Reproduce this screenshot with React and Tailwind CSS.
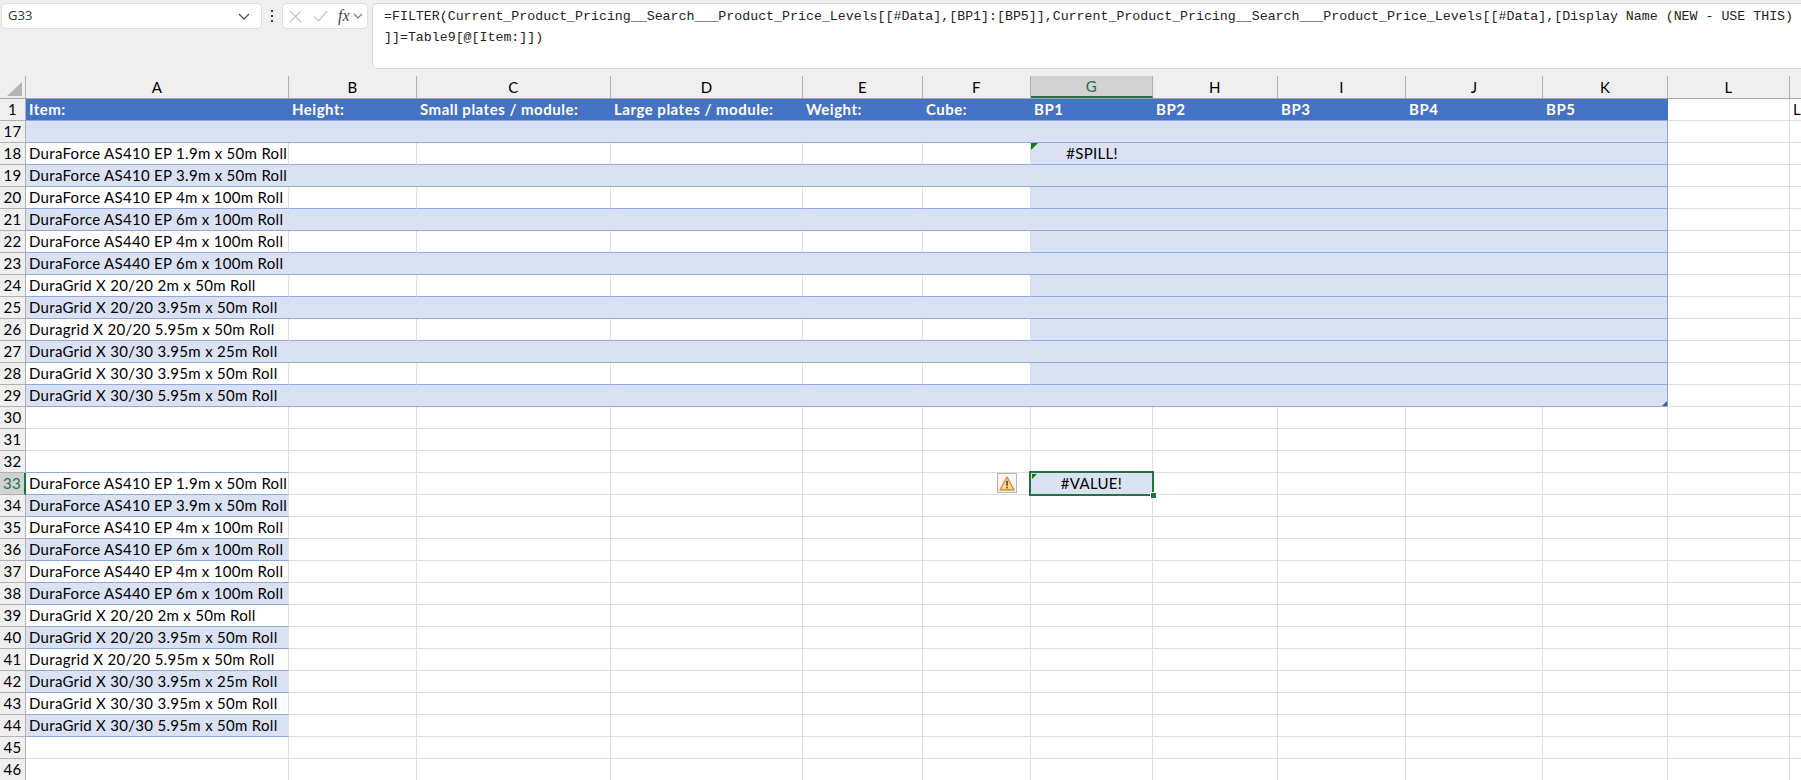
import React from 'react';

const columns = [
  { name: 'A', w: 'w-[263px]', head: 'Item:' },
  { name: 'B', w: 'w-[128px]', head: 'Height:' },
  { name: 'C', w: 'w-[194px]', head: 'Small plates / module:' },
  { name: 'D', w: 'w-[192px]', head: 'Large plates / module:' },
  { name: 'E', w: 'w-[120px]', head: 'Weight:' },
  { name: 'F', w: 'w-[108px]', head: 'Cube:' },
  { name: 'G', w: 'w-[122px]', head: 'BP1' },
  { name: 'H', w: 'w-[125px]', head: 'BP2' },
  { name: 'I', w: 'w-[128px]', head: 'BP3' },
  { name: 'J', w: 'w-[137px]', head: 'BP4' },
  { name: 'K', w: 'w-[125px]', head: 'BP5' },
  { name: 'L', w: 'w-[122px]', head: '' },
  { name: '', w: 'w-[12px]', head: '' },
];

const items = [
  'DuraForce AS410 EP 1.9m x 50m Roll',
  'DuraForce AS410 EP 3.9m x 50m Roll',
  'DuraForce AS410 EP 4m x 100m Roll',
  'DuraForce AS410 EP 6m x 100m Roll',
  'DuraForce AS440 EP 4m x 100m Roll',
  'DuraForce AS440 EP 6m x 100m Roll',
  'DuraGrid X 20/20 2m x 50m Roll',
  'DuraGrid X 20/20 3.95m x 50m Roll',
  'Duragrid X 20/20 5.95m x 50m Roll',
  'DuraGrid X 30/30 3.95m x 25m Roll',
  'DuraGrid X 30/30 3.95m x 50m Roll',
  'DuraGrid X 30/30 5.95m x 50m Roll',
];

const GRID = 'border-b border-r border-b-[#dedede] border-r-[#dedede]';

function ErrorFlag({ small }) {
  return (
    <svg
      className={`absolute ${small ? 'left-[1px] top-[1px] w-[5px] h-[5px]' : 'left-0 top-0 w-[7px] h-[7px]'}`}
      viewBox="0 0 7 7"
    >
      <polygon points="0,0 7,0 0,7" fill="#107c10" />
    </svg>
  );
}

function WarnIcon() {
  return (
    <div className="absolute left-[-34px] top-0 w-[20px] h-[20px] border border-[#b5b5b5] bg-[#f6f6f6] flex items-center justify-center">
      <svg width="16" height="15" viewBox="0 0 16 15">
        <polygon points="8,1 15,14 1,14" fill="#fbd9a0" stroke="#e8862a" strokeWidth="1.4" strokeLinejoin="round" />
        <rect x="7.3" y="4.8" width="1.5" height="5" fill="#3a3a3a" />
        <rect x="7.3" y="10.8" width="1.5" height="1.6" fill="#3a3a3a" />
      </svg>
    </div>
  );
}

function Selection() {
  return (
    <>
      <div className="absolute left-[-2px] top-[-2px] w-[125px] h-[25px] border-2 border-[#217346]" />
      <div className="absolute left-[119px] top-[19px] w-[5px] h-[5px] bg-[#217346] border border-white box-content" />
    </>
  );
}

function cellClass(kind, i) {
  const inTable = i <= 10;
  if (kind === 'head') {
    if (inTable) return 'bg-[#4472c4] border-b border-[#8ea9db] text-white font-bold tracking-[0.5px]';
    return GRID;
  }
  if (kind === 'blue' || kind === 'white') {
    if (!inTable) return GRID;
    const right = i === 10 ? 'border-r border-r-[#8ea9db]' : '';
    if (kind === 'blue' || i >= 6) return `bg-[#d9e1f2] border-b border-b-[#8ea9db] ${right}`;
    if (i === 5) return 'border-b border-r border-b-[#8ea9db] border-r-[#d9e1f2]';
    return 'border-b border-r border-b-[#8ea9db] border-r-[#dedede]';
  }
  if (kind === 'listBlue' && i === 0) return 'bg-[#d9e1f2] border-b border-b-[#8ea9db] border-r border-r-[#d9e1f2]';
  if ((kind === 'listWhite' || kind === 'listTop') && i === 0) return 'border-b border-r border-b-[#8ea9db] border-r-[#dedede]';
  return GRID;
}

function Row({ num, kind = 'plain', item, selected, children }) {
  return (
    <div className="flex h-[22px]">
      <div
        className={`w-[26px] shrink-0 flex items-center justify-center border-b border-b-[#b1b1b1] ${
          selected ? 'bg-[#d2d2d2] text-[#217346] border-r-2 border-r-[#217346]' : 'bg-[#efefef] border-r border-r-[#b1b1b1]'
        }`}
      >
        {num}
      </div>
      {columns.map((c, i) => (
        <div key={i} className={`${c.w} shrink-0 relative flex items-center whitespace-nowrap ${cellClass(kind, i)}`}>
          {kind === 'head' && c.head && <span className="pl-[3px]">{c.head}</span>}
          {i === 0 && item && <span className="pl-[3px]">{item}</span>}
          {kind === 'head' && i === 12 && <span className="pl-[3px]">L</span>}
          {children && children(i)}
        </div>
      ))}
    </div>
  );
}

function ColumnHeader() {
  return (
    <div className="flex h-[23px] bg-[#efefef] border-b border-[#a6a6a6]">
      <div className="w-[26px] shrink-0 relative border-r border-[#b1b1b1]">
        <svg className="absolute left-[7px] top-[6px]" width="15" height="14" viewBox="0 0 15 14">
          <polygon points="15,0 15,14 0,14" fill="#b4b4b4" />
        </svg>
      </div>
      {columns.map((c, i) => (
        <div
          key={i}
          className={`${c.w} shrink-0 flex items-center justify-center border-r border-[#b1b1b1] ${
            c.name === 'G' ? 'bg-[#d2d2d2] text-[#217346] h-[22px] border-b-2 border-b-[#217346]' : ''
          }`}
        >
          {c.name}
        </div>
      ))}
    </div>
  );
}

function FormulaBar() {
  return (
    <div className="flex items-start h-[76px] bg-[#efefef] pt-[3px] tracking-normal">
      <div className="w-[261px] h-[26px] ml-[1px] shrink-0 bg-white rounded-[5px] border border-[#e0e0e0] flex items-center justify-between pl-[6px] pr-[11px] text-[13px] font-['Open_Sans',sans-serif] text-[#333]">
        <span>G33</span>
        <svg width="12" height="7" viewBox="0 0 12 7" fill="none" stroke="#555" strokeWidth="1.3">
          <path d="M1 1l5 5 5-5" />
        </svg>
      </div>
      <div className="w-[20px] h-[26px] shrink-0 flex flex-col items-center justify-center gap-[3px]">
        <div className="w-[2px] h-[2px] bg-[#444]" />
        <div className="w-[2px] h-[2px] bg-[#444]" />
        <div className="w-[2px] h-[2px] bg-[#444]" />
      </div>
      <div className="w-[86px] h-[26px] shrink-0 bg-white rounded-[5px] border border-[#e0e0e0] flex items-center pl-[6px]">
        <svg width="13" height="13" viewBox="0 0 13 13" fill="none" stroke="#c4c4c4" strokeWidth="1.2">
          <path d="M1 1l11 11M12 1L1 12" />
        </svg>
        <svg className="ml-[11px]" width="15" height="12" viewBox="0 0 15 12" fill="none" stroke="#c4c4c4" strokeWidth="1.2">
          <path d="M1 6.5l4.5 4.5L14 1" />
        </svg>
        <span className="ml-[10px] font-['Liberation_Serif',serif] italic text-[16px] text-[#444] leading-none">fx</span>
        <svg className="ml-[3px]" width="10" height="6" viewBox="0 0 10 6" fill="none" stroke="#777" strokeWidth="1.1">
          <path d="M1 1l4 4 4-4" />
        </svg>
      </div>
      <div className="flex-1 ml-[4px] h-[66px] bg-white rounded-l-[5px] border-y border-l border-[#d6d6d6] pl-[11px] pt-[2px] font-['Liberation_Mono',monospace] text-[13.28px] leading-[21px] text-[#222] whitespace-nowrap overflow-hidden">
        <div>=FILTER(Current_Product_Pricing__Search___Product_Price_Levels[[#Data],[BP1]:[BP5]],Current_Product_Pricing__Search___Product_Price_Levels[[#Data],[Display Name (NEW - USE THIS)</div>
        <div>]]=Table9[@[Item:]])</div>
      </div>
    </div>
  );
}

export default function App() {
  return (
    <div className="h-screen w-full overflow-hidden bg-white text-black font-['Lato',sans-serif] text-[15px] tracking-[0.3px]">
      <FormulaBar />
      <ColumnHeader />
      <Row num="1" kind="head" />
      <Row num="17" kind="blue" />
      {items.map((item, idx) => (
        <Row key={item} num={18 + idx} kind={idx % 2 === 0 ? 'white' : 'blue'} item={item}>
          {(i) =>
            idx === 0 && i === 6 ? (
              <>
                <ErrorFlag />
                <span className="w-full text-center">#SPILL!</span>
              </>
            ) : idx === 11 && i === 10 ? (
              <svg className="absolute right-0 bottom-0" width="5" height="5" viewBox="0 0 5 5">
                <polygon points="5,0 5,5 0,5" fill="#3f51b5" />
              </svg>
            ) : null
          }
        </Row>
      ))}
      <Row num="30" />
      <Row num="31" />
      <Row num="32" kind="listTop" />
      {items.map((item, idx) => (
        <Row key={item} num={33 + idx} kind={idx % 2 === 0 ? 'listWhite' : 'listBlue'} item={item} selected={idx === 0}>
          {(i) =>
            idx === 0 && i === 6 ? (
              <div className="absolute inset-0 z-10 bg-[#d9e1f2] flex items-center justify-center">
                <ErrorFlag small />
                <WarnIcon />
                #VALUE!
                <Selection />
              </div>
            ) : null
          }
        </Row>
      ))}
      <Row num="45" />
      <Row num="46" />
    </div>
  );
}
